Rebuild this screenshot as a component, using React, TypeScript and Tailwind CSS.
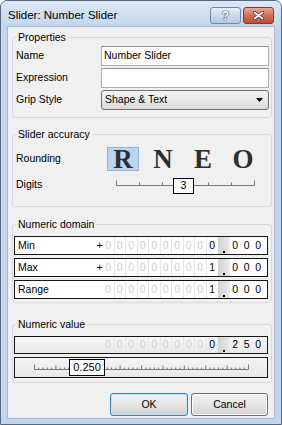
import React from "react";

const sans = "font-['Liberation_Sans',Arial,sans-serif]";

function Legend({ children }: { children: React.ReactNode }) {
  return <legend className="ml-[3px] px-[2px] leading-[12px]">{children}</legend>;
}

function Cells({ digit, decimals }: { digit: string; decimals: string[] }) {
  return (
    <>
      {Array.from({ length: 9 }).map((_, i) => (
        <div
          key={i}
          className="w-[11.5px] shrink-0 flex items-center justify-center text-[#d0d0d0] border-r border-[#e6e6e6]"
        >
          0
        </div>
      ))}
      <div className="w-[11.5px] shrink-0 flex items-center justify-center">{digit}</div>
      <div className="w-[11.5px] shrink-0 flex items-end justify-center pb-[1px] bg-gradient-to-r from-[#d2d2d2] via-[#dedede] to-[#ececec]">
        <div className="w-[2px] h-[2px] bg-black" />
      </div>
      {decimals.map((d, i) => (
        <div key={i} className="w-[11.5px] shrink-0 flex items-center justify-center">
          {d}
        </div>
      ))}
    </>
  );
}

function DomainRow({ label, plus, digit }: { label: string; plus?: boolean; digit: string }) {
  return (
    <div className="h-[19px] flex border border-[#161616] bg-white pr-[3px]">
      <div className="flex-1 pl-[3px] flex items-center">{label}</div>
      <div className="w-[7px] shrink-0 flex items-center justify-center">{plus ? "+" : ""}</div>
      <Cells digit={digit} decimals={["0", "0", "0"]} />
    </div>
  );
}

function ValueTicks() {
  const ticks = Array.from({ length: 51 }).map((_, i) => {
    const x = 19.5 + (i * 214) / 50;
    const h = i === 0 || i === 50 ? 5 : i % 5 === 0 ? 4 : 2;
    return <line key={i} x1={x} x2={x} y1={11.5} y2={11.5 - h} stroke="#7a7a7a" strokeWidth={1} />;
  });
  return (
    <svg width="252" height="19" className="block">
      <line x1={19.5} x2={233.5} y1={11.5} y2={11.5} stroke="#7a7a7a" strokeWidth={1} />
      {ticks}
    </svg>
  );
}

function DigitTicks() {
  return (
    <svg width="150" height="20" className="block">
      <line x1={6.5} x2={144.5} y1={10.5} y2={10.5} stroke="#7a7a7a" strokeWidth={1} />
      {Array.from({ length: 7 }).map((_, i) => {
        const x = 6.5 + i * 23;
        const h = i === 0 || i === 6 ? 5 : 3;
        return <line key={i} x1={x} x2={x} y1={10.5} y2={10.5 - h} stroke="#7a7a7a" strokeWidth={1} />;
      })}
    </svg>
  );
}

export default function App() {
  return (
    <div
      className={`w-[282px] h-[425px] ${sans} text-[10.5px] text-black bg-[#c2d5ec] border border-[#566880] rounded-t-[7px] flex flex-col overflow-hidden`}
    >
      {/* Title bar */}
      <div className="h-[25px] shrink-0 flex items-start pl-[7px] pr-[7px] bg-gradient-to-b from-[#dce8f5] to-[#c4d7ed]">
        <div className="pt-[7px] leading-[14px] text-[11.5px] flex-1">Slider: Number Slider</div>
        <div className="mt-[6px] flex gap-[2px]">
          <div className="w-[31px] h-[17px] rounded-[3px] border border-[#7288a3] bg-gradient-to-b from-[#e6eef8] via-[#cddbed] to-[#b4c9e3] flex items-center justify-center text-white font-bold text-[12px] leading-none [text-shadow:0_0_1px_#2d4868,0_0_1px_#2d4868,0_0_1px_#2d4868]">
            ?
          </div>
          <div className="w-[31px] h-[17px] rounded-[3px] border border-[#7a3e33] bg-gradient-to-b from-[#e9a892] via-[#d36f57] to-[#c24a31] flex items-center justify-center">
            <svg width="11" height="9" viewBox="0 0 11 9">
              <path d="M1.5 1.5L9.5 7.5M9.5 1.5L1.5 7.5" stroke="#5a2219" strokeWidth="3.4" strokeLinecap="round" />
              <path d="M1.5 1.5L9.5 7.5M9.5 1.5L1.5 7.5" stroke="#ffffff" strokeWidth="2" strokeLinecap="round" />
            </svg>
          </div>
        </div>
      </div>

      {/* Content */}
      <div className="mx-[6px] h-[393px] shrink-0 border border-[#a6b9d0] bg-[#f0f0f0] flex flex-col pl-[4px] pr-[2px]">
        {/* Properties */}
        <fieldset className="mt-[4px] h-[87px] border border-[#d3dbe2] rounded-[3px]">
          <Legend>Properties</Legend>
          <div className="mt-[3px] flex flex-col gap-[2px] pl-[3px] pr-[2px]">
            <div className="h-[20px] flex items-center">
              <div className="w-[85px] shrink-0">Name</div>
              <div className="flex-1 h-full bg-white border border-[#abadb3] border-t-[#8f949c] flex items-center pl-[2px]">
                Number Slider
              </div>
            </div>
            <div className="h-[20px] flex items-center">
              <div className="w-[85px] shrink-0">Expression</div>
              <div className="flex-1 h-full bg-white border border-[#abadb3] border-t-[#8f949c]" />
            </div>
            <div className="h-[20px] flex items-center">
              <div className="w-[85px] shrink-0">Grip Style</div>
              <div className="flex-1 h-full rounded-[3px] border border-[#707070] bg-gradient-to-b from-[#f3f3f3] via-[#ebebeb] to-[#d7d7d7] flex items-center pl-[3px] pr-[5px]">
                <span className="flex-1">Shape &amp; Text</span>
                <svg width="7" height="4" viewBox="0 0 7 4">
                  <path d="M0 0H7L3.5 4Z" fill="#000" />
                </svg>
              </div>
            </div>
          </div>
        </fieldset>

        {/* Slider accuracy */}
        <fieldset className="mt-[10px] h-[79px] border border-[#d3dbe2] rounded-[3px]">
          <Legend>Slider accuracy</Legend>
          <div className="mt-[7px] h-[24px] flex items-center pl-[3px]">
            <div className="w-[87px] shrink-0">Rounding</div>
            {["R", "N", "E", "O"].map((c, i) => (
              <div key={c} className="w-[40px] h-[24px] shrink-0 flex items-center justify-center">
                <div
                  className={`w-[32px] h-[24px] flex items-center justify-center font-['Liberation_Serif',serif] font-bold text-[27px] leading-none text-[#2e2e2e] ${
                    i === 0 ? "bg-[#bcd6ef] border border-[#8fb2d6]" : ""
                  }`}
                >
                  {c}
                </div>
              </div>
            ))}
          </div>
          <div className="mt-[4px] h-[20px] flex items-center pl-[3px]">
            <div className="w-[94px] shrink-0">Digits</div>
            <div className="relative w-[150px] h-[20px]">
              <DigitTicks />
              <div className="absolute left-[63px] top-[3px] w-[21px] h-[16px] bg-white border border-black flex items-center justify-center">
                3
              </div>
            </div>
          </div>
        </fieldset>

        {/* Numeric domain */}
        <fieldset className="mt-[11px] h-[85px] border border-[#d3dbe2] rounded-[3px]">
          <Legend>Numeric domain</Legend>
          <div className="mt-[6px] flex flex-col gap-[3px] pl-[1px] pr-[3px]">
            <DomainRow label="Min" plus digit="0" />
            <DomainRow label="Max" plus digit="1" />
            <DomainRow label="Range" digit="1" />
          </div>
        </fieldset>

        {/* Numeric value */}
        <fieldset className="mt-[15px] h-[65px] border border-[#d3dbe2] rounded-[3px]">
          <Legend>Numeric value</Legend>
          <div className="mt-[6px] flex flex-col gap-[3px] pl-[1px] pr-[3px]">
            <div className="h-[18px] flex border border-[#161616] bg-gradient-to-b from-[#f6f6f6] to-[#e9e9e9] pr-[3px]">
              <div className="flex-1" />
              <Cells digit="0" decimals={["2", "5", "0"]} />
            </div>
            <div className="relative h-[21px] border border-[#161616] bg-gradient-to-b from-[#f4f4f4] to-[#e8e8e8]">
              <ValueTicks />
              <div className="absolute left-[54px] top-[1px] w-[36px] h-[17px] bg-white border border-black flex items-center justify-center text-[11px]">
                0.250
              </div>
            </div>
          </div>
        </fieldset>

        {/* Buttons */}
        <div className="mt-[10px] h-[23px] flex justify-end gap-[3px] pr-[4px]">
          <button className="w-[78px] h-[23px] rounded-[3px] border border-[#3c7fb1] bg-gradient-to-b from-[#f2f2f2] via-[#e6e6e6] to-[#d2d2d2] shadow-[inset_0_0_0_1px_#c2e6f8]">
            OK
          </button>
          <button className="w-[77px] h-[23px] rounded-[3px] border border-[#707070] bg-gradient-to-b from-[#f2f2f2] via-[#e6e6e6] to-[#d2d2d2] shadow-[inset_0_0_0_1px_#fbfbfb]">
            Cancel
          </button>
        </div>
      </div>
    </div>
  );
}
